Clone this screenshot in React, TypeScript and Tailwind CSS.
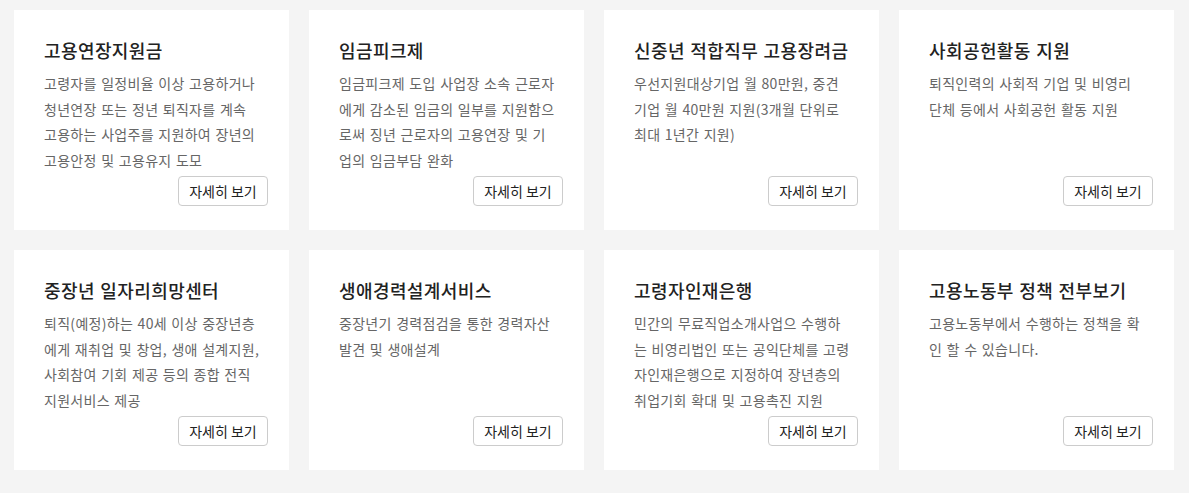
import React from "react";

interface Policy {
  title: string;
  lines: string[];
}

// 원본 화면과 같은 줄바꿈을 유지하기 위해 줄 단위로 나눔
const policies: Policy[] = [
  {
    title: "고용연장지원금",
    lines: [
      "고령자를 일정비율 이상 고용하거나",
      "청년연장 또는 정년 퇴직자를 계속",
      "고용하는 사업주를 지원하여 장년의",
      "고용안정 및 고용유지 도모",
    ],
  },
  {
    title: "임금피크제",
    lines: [
      "임금피크제 도입 사업장 소속 근로자",
      "에게 감소된 임금의 일부를 지원함으",
      "로써 징년 근로자의 고용연장 및 기",
      "업의 임금부담 완화",
    ],
  },
  {
    title: "신중년 적합직무 고용장려금",
    lines: [
      "우선지원대상기업 월 80만원, 중견",
      "기업 월 40만원 지원(3개월 단위로",
      "최대 1년간 지원)",
    ],
  },
  {
    title: "사회공헌활동 지원",
    lines: [
      "퇴직인력의 사회적 기업 및 비영리",
      "단체 등에서 사회공헌 활동 지원",
    ],
  },
  {
    title: "중장년 일자리희망센터",
    lines: [
      "퇴직(예정)하는 40세 이상 중장년층",
      "에게 재취업 및 창업, 생애 설계지원,",
      "사회참여 기회 제공 등의 종합 전직",
      "지원서비스 제공",
    ],
  },
  {
    title: "생애경력설계서비스",
    lines: [
      "중장년기 경력점검을 통한 경력자산",
      "발견 및 생애설계",
    ],
  },
  {
    title: "고령자인재은행",
    lines: [
      "민간의 무료직업소개사업으 수행하",
      "는 비영리법인 또는 공익단체를 고령",
      "자인재은행으로 지정하여 장년층의",
      "취업기회 확대 및 고용촉진 지원",
    ],
  },
  {
    title: "고용노동부 정책 전부보기",
    lines: [
      "고용노동부에서 수행하는 정책을 확",
      "인 할 수 있습니다.",
    ],
  },
];

const PolicyCard = ({ title, lines }: Policy) => {
  return (
    <div className="bg-white h-[220px] pl-[30px] pr-[21px] pt-[27px] pb-[24px] flex flex-col">
      <div className="pr-[9px]">
        <h3 className="text-[18px] leading-[26px] font-medium text-[#222] tracking-[0.4px] [word-spacing:1px]">
          {title}
        </h3>
        <p className="mt-[8px] text-[14px] leading-[25.5px] text-[#666] tracking-[0.3px] [word-spacing:1px]">
          {lines.map((line) => (
            <span key={line} className="block whitespace-nowrap">
              {line}
            </span>
          ))}
        </p>
      </div>
      <div className="mt-auto flex justify-end">
        <button
          type="button"
          className="w-[90px] h-[30px] bg-white border border-[#ccc] rounded-[4px] text-[14px] text-[#222]"
        >
          자세히 보기
        </button>
      </div>
    </div>
  );
};

export default function App() {
  return (
    <div
      className="min-h-[493px] bg-[#f4f4f4] pl-[14px] pr-[15px] pt-[10px] pb-[23px]"
      style={{ fontFamily: '"Noto Sans CJK KR", "Noto Sans", sans-serif' }}
    >
      <div className="grid grid-cols-4 gap-[20px]">
        {policies.map((p) => (
          <PolicyCard key={p.title} title={p.title} lines={p.lines} />
        ))}
      </div>
    </div>
  );
}
